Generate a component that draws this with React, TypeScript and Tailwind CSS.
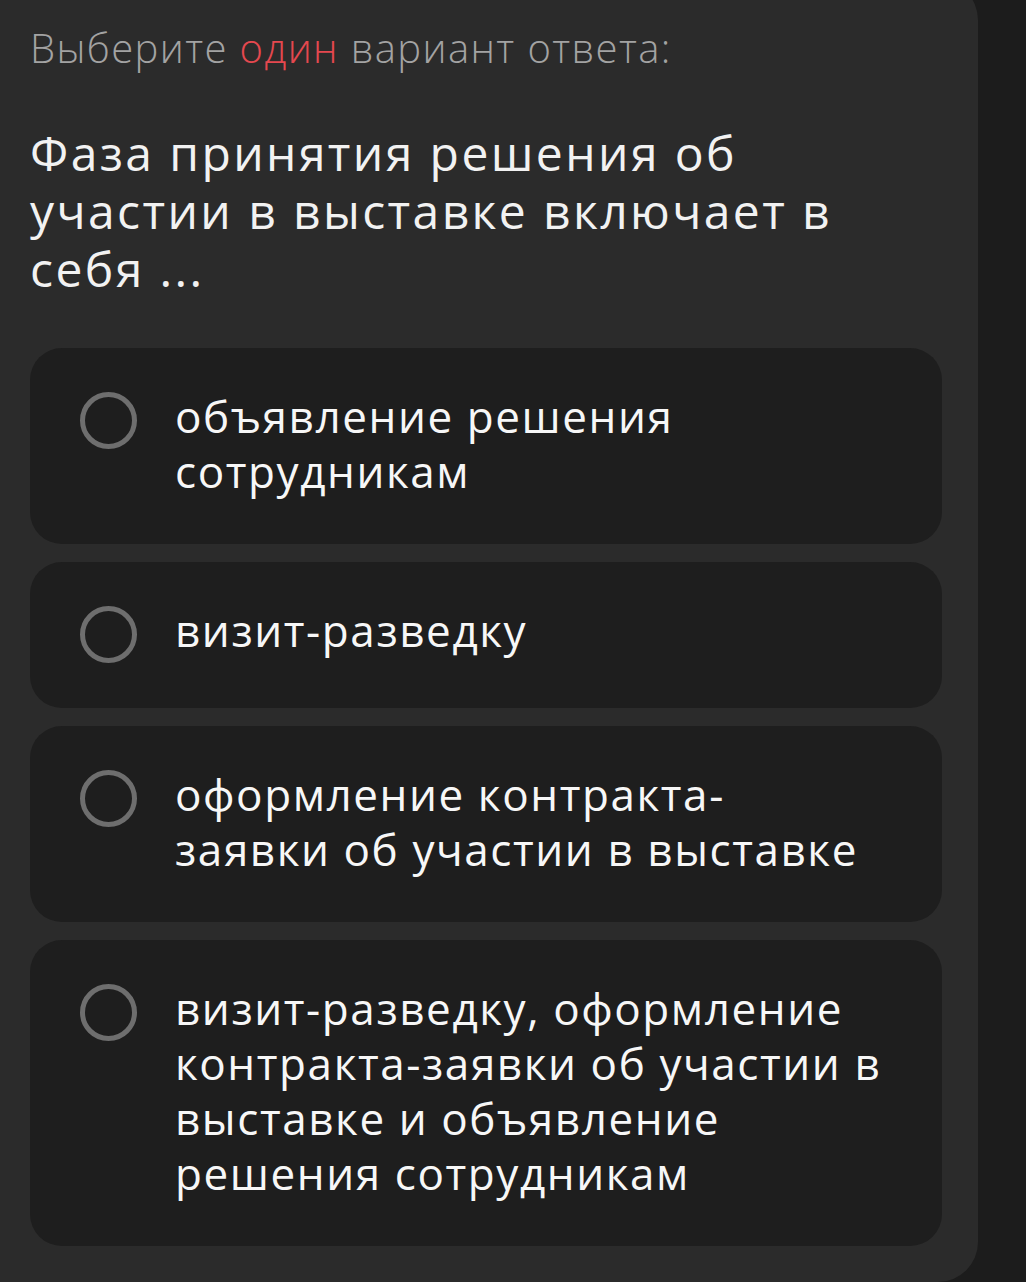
import React from "react";

const options: string[][] = [
  ["объявление решения", "сотрудникам"],
  ["визит-разведку"],
  ["оформление контракта-", "заявки об участии в выставке"],
  [
    "визит-разведку, оформление",
    "контракта-заявки об участии в",
    "выставке и объявление",
    "решения сотрудникам",
  ],
];

function Radio() {
  return (
    <div className="mt-[3px] h-[57px] w-[57px] shrink-0 rounded-full border-[5px] border-[#6e6e6e]" />
  );
}

export default function App() {
  return (
    <div
      className="h-[1282px] w-[1026px] overflow-hidden bg-[#1c1c1c]"
      style={{ fontFamily: '"Open Sans", "Noto Sans", sans-serif' }}
    >
      <div className="ml-[-40px] mt-[-20px] h-[1302px] w-[1018px] rounded-[40px] bg-[#2b2b2b] pl-[70px] pr-[36px] pt-[44px]">
        <div className="text-[40px] font-light leading-[48px] tracking-[0.035em] text-[#a3a3a3]">
          Выберите <span className="text-[#e5484f]">один</span> вариант ответа:
        </div>
        <div className="mt-[52px] w-[850px] text-[48px] font-medium leading-[58px] tracking-[0.05em] text-[#f2f2f2]">
          Фаза принятия решения об
          <br />
          участии в выставке включает в
          <br />
          себя ...
        </div>
        <div className="mt-[50px] flex flex-col gap-[18px]">
          {options.map((o) => (
            <div
              key={o.join(" ")}
              className="flex items-start gap-[38px] rounded-[32px] bg-[#1e1e1e] pb-[45px] pl-[50px] pr-[40px] pt-[41px]"
            >
              <Radio />
              <div className="text-[44px] leading-[55px] tracking-[0.036em] text-[#f7f7f7]">
                {o.map((l, i) => (
                  <div key={i}>{l}</div>
                ))}
              </div>
            </div>
          ))}
        </div>
      </div>
    </div>
  );
}
